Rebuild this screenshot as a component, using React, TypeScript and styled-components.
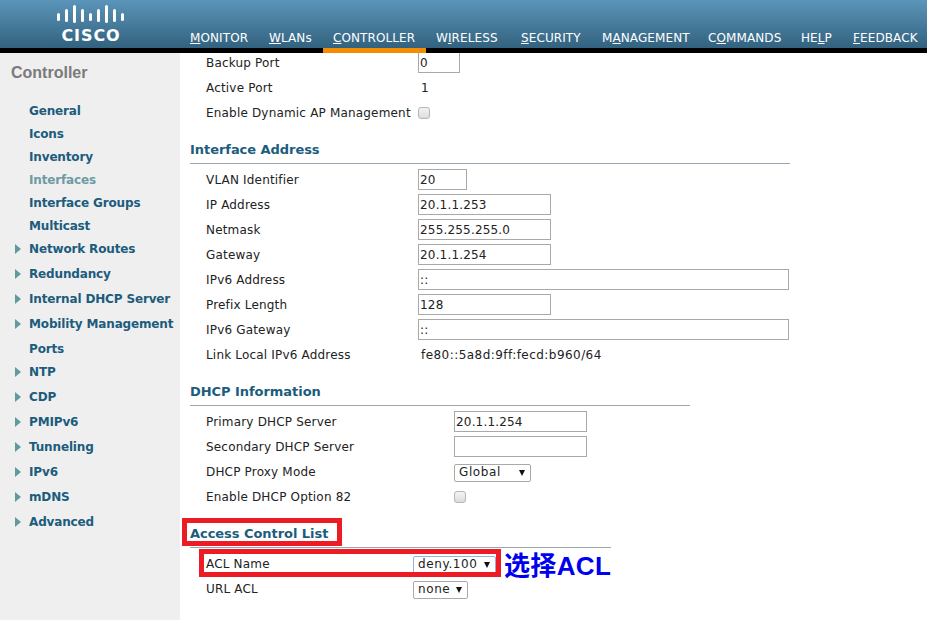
import React from "react";
import styled, { createGlobalStyle } from "styled-components";

const Global = createGlobalStyle`
  html, body { margin: 0; padding: 0; background: #fff; height: 100%; overflow: hidden; }
  body { font-family: "DejaVu Sans", Verdana, sans-serif; font-size: 12px; color: #222; letter-spacing: 0.18px; }
`;
const Page = styled.div`width: 927px; height: 620px; overflow: hidden; display: flex; flex-direction: column;`;
const Header = styled.header`
  height: 48px; flex: none; display: flex; border-bottom: 5px solid #000; box-sizing: content-box;
  background: linear-gradient(#5b95b9, #32627f);
`;
const LogoBox = styled.div`width: 190px; flex: none; display: flex; flex-direction: column; align-items: center; padding-top: 5px; box-sizing: border-box; position: relative; left: -4px;`;
const LogoText = styled.div`font: bold 16px/16px "DejaVu Sans", sans-serif; letter-spacing: 0.9px; color: #fff; margin-top: 5px;`;
const Nav = styled.nav`display: flex; align-items: flex-end; flex: 1; position: relative;`;
const NavItem = styled.a<{ $active?: boolean; $width: number }>`
  width: ${p => p.$width}px; flex: none; height: 48px; box-sizing: border-box; padding-top: 31px; position: relative;
  color: #fff; font-size: 12px; line-height: 15px; white-space: nowrap; display: block; letter-spacing: 0.1px;
  u { text-underline-offset: 1px; }
  ${p => p.$active ? `&::after { content: ""; position: absolute; left: -10px; right: 10px; top: 48px; height: 5px; background: #f28c00; }` : ""}
`;
const Body = styled.div`flex: 1; display: flex; min-height: 0;`;
const Sidebar = styled.aside`width: 180px; flex: none; background: #efefef; box-sizing: border-box; padding-top: 11px;`;
const SideTitle = styled.div`font: bold 16px/18px "Liberation Sans", Arial, sans-serif; color: #7a7a7a; padding-left: 11px; margin-bottom: 18px; letter-spacing: 0;`;
const SideItem = styled.div<{ $arrow?: boolean; $muted?: boolean }>`
  height: ${p => p.$arrow ? 25 : 23}px; line-height: 23px; padding-left: 29px; box-sizing: border-box; position: relative;
  font-weight: bold; font-size: 12px; white-space: nowrap; letter-spacing: -0.15px; color: ${p => p.$muted ? "#6f9aa3" : "#1c5c7d"};
  ${p => p.$arrow ? `&::before { content: ""; position: absolute; left: 15px; top: 6px; border-left: 6px solid #5f9a9e; border-top: 5px solid transparent; border-bottom: 5px solid transparent; }` : ""}
`;
const Main = styled.main`flex: 1; padding-left: 10px; position: relative; overflow: hidden;`;
const Section = styled.section<{ $width: number; $gap?: number }>`width: ${p => p.$width}px; margin-top: ${p => p.$gap ?? 0}px; position: relative;`;
const SectionTitle = styled.h3`margin: 0 0 3px; height: 23px; font-size: 13px; line-height: 20px; font-weight: bold; letter-spacing: -0.05px; color: #1c5c7d; border-bottom: 1px solid #9aa7b0; box-sizing: content-box;`;
const Row = styled.div`
  height: 25px; display: flex; align-items: center; padding-left: 16px;
`;
const Label = styled.div<{ $width: number }>`width: ${p => p.$width}px; flex: none; white-space: nowrap;`;
const Input = styled.div<{ $width: number }>`
  width: ${p => p.$width}px; height: 21px; box-sizing: border-box; border: 1px solid #a9a9a9; padding: 0 1px; line-height: 20px; background: #fff; white-space: nowrap;
`;
const Check = styled.span`width: 12px; height: 12px; box-sizing: border-box; border: 1px solid #b5b5b5; border-radius: 3px; background: linear-gradient(#f4f4f4, #dcdcdc); display: block;`;
const Select = styled.div<{ $width: number; $focus?: boolean }>`
  width: ${p => p.$width}px; height: 18px; box-sizing: border-box; border: 1px solid ${p => p.$focus ? "#8fb2de" : "#a9a9a9"}; border-radius: 2px;
  padding-left: 4px; line-height: 17px; display: flex; justify-content: space-between; align-items: center; white-space: nowrap; margin-top: 2px; letter-spacing: 0.6px;
  &::after { content: ""; margin-right: 5px; border-top: 6px solid #111; border-left: 3px solid transparent; border-right: 3px solid transparent; }
`;
const Mark = styled.div<{ $l: number; $t: number; $w: number; $h: number }>`
  position: absolute; left: ${p => p.$l}px; top: ${p => p.$t}px; width: ${p => p.$w}px; height: ${p => p.$h}px; box-sizing: border-box; border: 5px solid #ed1c24;
`;
const Note = styled.div`
  position: absolute; left: 314px; top: 26px; font: bold 26px/32px "Liberation Sans", "Noto Sans CJK SC", sans-serif; letter-spacing: 0.35px; color: #0000ee; white-space: nowrap;
`;
const Plain = styled.div`padding-left: 3px; letter-spacing: 0.45px;`;

const NAV: [string, string, string, number, boolean?][] = [
  ["", "M", "ONITOR", 79],
  ["", "W", "LANs", 64],
  ["", "C", "ONTROLLER", 103, true],
  ["W", "I", "RELESS", 85],
  ["", "S", "ECURITY", 81],
  ["M", "A", "NAGEMENT", 106],
  ["C", "O", "MMANDS", 93],
  ["HE", "L", "P", 52],
  ["", "F", "EEDBACK", 80],
];
const SIDE: [string, boolean?, boolean?][] = [
  ["General"], ["Icons"], ["Inventory"], ["Interfaces", false, true], ["Interface Groups"], ["Multicast"],
  ["Network Routes", true], ["Redundancy", true], ["Internal DHCP Server", true], ["Mobility Management", true],
  ["Ports"], ["NTP", true], ["CDP", true], ["PMIPv6", true], ["Tunneling", true], ["IPv6", true], ["mDNS", true], ["Advanced", true],
];

const Bars = () => (
  <svg width="68" height="18" viewBox="0 0 68 18" fill="#fff">
    {[[0,8,8],[8,4,13],[16,0,18],[24,4,13],[32,8,8],[40,4,13],[48,0,18],[56,4,13],[64,8,8]].map(([x,y,h],i)=>(
      <rect key={i} x={x} y={y} width="3" height={h} rx="1.5" />
    ))}
  </svg>
);

export default function App() {
  return (
    <Page>
      <Global />
      <Header>
        <LogoBox><Bars /><LogoText>CISCO</LogoText></LogoBox>
        <Nav>
          {NAV.map(([a,b,c,w,act]) => (
            <NavItem key={b+c} $width={w} $active={act}>{a}<u>{b}</u>{c}</NavItem>
          ))}
        </Nav>
      </Header>
      <Body>
        <Sidebar>
          <SideTitle>Controller</SideTitle>
          {SIDE.map(([t,a,m]) => <SideItem key={t} $arrow={a} $muted={m}>{t}</SideItem>)}
        </Sidebar>
        <Main>
          <Section $width={600} $gap={-3}>
            <Row><Label $width={212}>Backup Port</Label><Input $width={42}>0</Input></Row>
            <Row><Label $width={212}>Active Port</Label><Plain>1</Plain></Row>
            <Row><Label $width={212}>Enable Dynamic AP Management</Label><Check /></Row>
          </Section>
          <Section $width={600} $gap={15}>
            <SectionTitle>Interface Address</SectionTitle>
            <Row><Label $width={212}>VLAN Identifier</Label><Input $width={49}>20</Input></Row>
            <Row><Label $width={212}>IP Address</Label><Input $width={133}>20.1.1.253</Input></Row>
            <Row><Label $width={212}>Netmask</Label><Input $width={133}>255.255.255.0</Input></Row>
            <Row><Label $width={212}>Gateway</Label><Input $width={133}>20.1.1.254</Input></Row>
            <Row><Label $width={212}>IPv6 Address</Label><Input $width={371}>::</Input></Row>
            <Row><Label $width={212}>Prefix Length</Label><Input $width={133}>128</Input></Row>
            <Row><Label $width={212}>IPv6 Gateway</Label><Input $width={371}>::</Input></Row>
            <Row><Label $width={212}>Link Local IPv6 Address</Label><Plain>fe80::5a8d:9ff:fecd:b960/64</Plain></Row>
          </Section>
          <Section $width={500} $gap={15}>
            <SectionTitle>DHCP Information</SectionTitle>
            <Row><Label $width={248}>Primary DHCP Server</Label><Input $width={133}>20.1.1.254</Input></Row>
            <Row><Label $width={248}>Secondary DHCP Server</Label><Input $width={133} /></Row>
            <Row><Label $width={248}>DHCP Proxy Mode</Label><Select $width={77}>Global</Select></Row>
            <Row><Label $width={248}>Enable DHCP Option 82</Label><Check /></Row>
          </Section>
          <Section $width={421} $gap={15}>
            <SectionTitle>Access Control List</SectionTitle>
            <Row><Label $width={207}>ACL Name</Label><Select $width={83} $focus>deny.100</Select></Row>
            <Row><Label $width={207}>URL ACL</Label><Select $width={55}>none</Select></Row>
            <Mark $l={-8} $t={-6} $w={160} $h={28} />
            <Mark $l={9} $t={25} $w={302} $h={28} />
            <Note>选择ACL</Note>
          </Section>
        </Main>
      </Body>
    </Page>
  );
}
